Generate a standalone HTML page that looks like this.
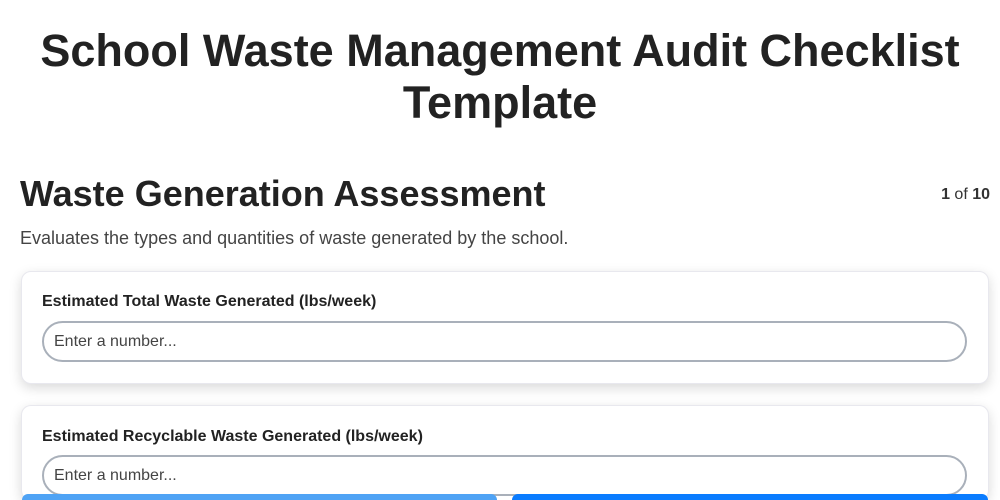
<!DOCTYPE html>
<html style="height:500px;overflow:hidden"><head><style>
body{margin:0;width:1000px;height:500px;overflow:hidden;background:#fff;font-family:"Liberation Sans",sans-serif;color:#222;position:relative}
h1{margin:0;position:absolute;top:25px;left:0;width:1000px;text-align:center;font-size:45px;line-height:52px;font-weight:bold;color:#222}
h2{margin:0;position:absolute;top:173px;left:20px;font-size:36px;line-height:42px;font-weight:bold;color:#222}
.pg{position:absolute;top:186px;right:10px;font-size:16px;color:#333}
.desc{position:absolute;top:228px;left:20px;font-size:18px;color:#444}
.card{position:absolute;left:21px;width:966px;background:#fff;border-radius:10px;border:1px solid #e8e8ee;box-shadow:0 4px 12px rgba(0,0,0,.15);overflow:hidden}
.lbl{position:absolute;left:20px;font-size:16px;font-weight:bold;color:#222}
.inp{position:absolute;left:20px;width:911px;height:37px;border:2px solid #a9b0ba;border-radius:21px;font-size:16px;color:#444;line-height:37px;padding-left:10px;box-sizing:content-box}
.btn{position:absolute;top:494px;height:6px;border-radius:16px 16px 0 0}
</style></head><body>
<h1>School Waste Management Audit Checklist<br>Template</h1>
<h2>Waste Generation Assessment</h2>
<div class="pg"><b>1</b> of <b>10</b></div>
<div class="desc">Evaluates the types and quantities of waste generated by the school.</div>
<div class="card" style="top:271px;height:111px">
<div class="lbl" style="top:21px">Estimated Total Waste Generated (lbs/week)</div>
<div class="inp" style="top:49px">Enter a number...</div>
</div>
<div class="card" style="top:405px;height:94px;border-bottom:none">
<div class="lbl" style="top:22px">Estimated Recyclable Waste Generated (lbs/week)</div>
<div class="inp" style="top:49px">Enter a number...</div>
</div>
<div class="btn" style="left:22px;width:475px;background:#4fa3f5"></div>
<div class="btn" style="left:512px;width:476px;background:#0a7cff"></div>
</body></html>
